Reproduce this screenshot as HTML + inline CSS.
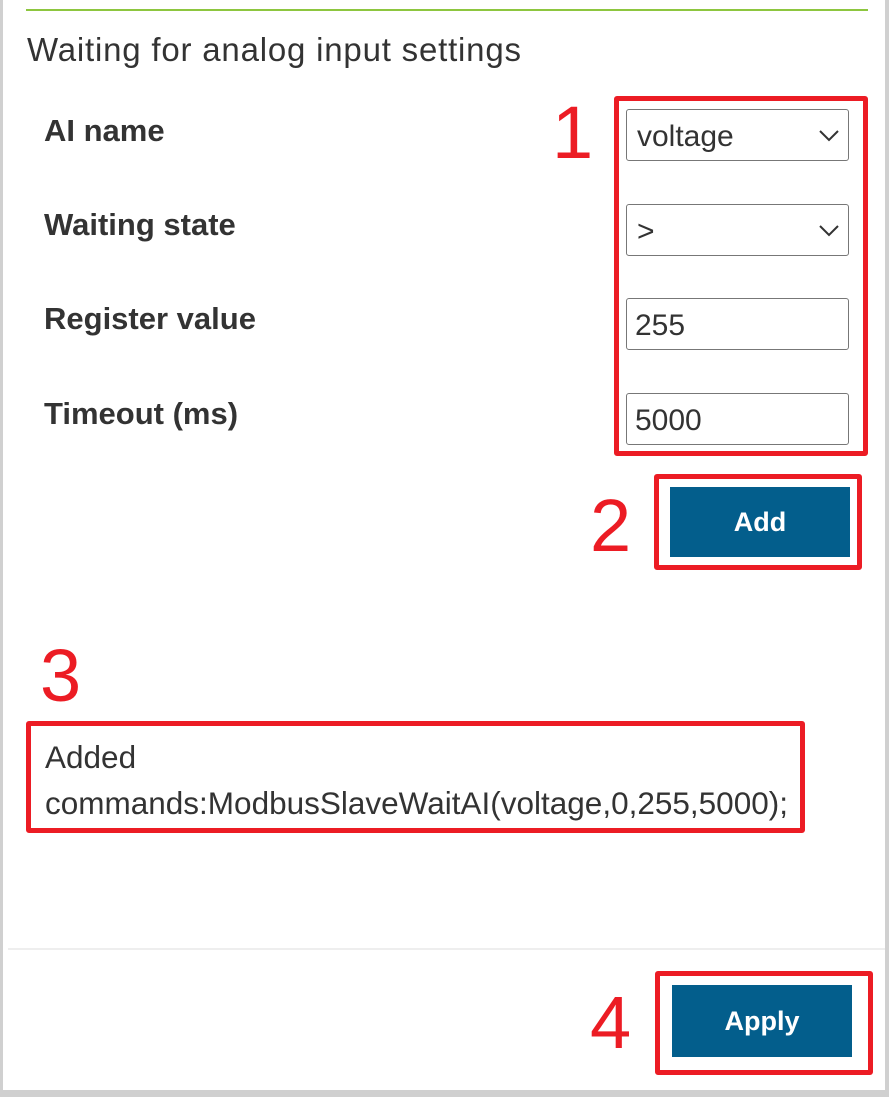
<!DOCTYPE html>
<html><head><style>
body{margin:0;width:889px;height:1097px;background:#d0d0d0;position:relative;overflow:hidden;font-family:"Liberation Sans",sans-serif;}
.p{position:absolute;left:3px;top:0;width:882px;height:1090px;background:#fff;}
.a{position:absolute;}
.lbl{position:absolute;left:44px;font-weight:bold;font-size:31px;color:#333;}
.f{position:absolute;left:626px;width:223px;height:52px;border:1.5px solid #777;border-radius:3px;font-size:30px;color:#333;box-sizing:border-box;padding:10px 0 0 8px;}
.r{position:absolute;border:5px solid #ec1c24;border-radius:3px;box-sizing:border-box;}
.n{position:absolute;color:#ec1c24;font-size:74px;line-height:74px;}
.b{position:absolute;background:#035e8c;color:#fff;font-weight:bold;font-size:27px;text-align:center;}
</style></head><body>
<div class="p"></div>
<div class="a" style="left:26px;top:9px;width:842px;height:2px;background:#8dc63f"></div>
<div class="a" style="left:27px;top:31px;color:#333;font-size:33px;letter-spacing:0.8px">Waiting for analog input settings</div>
<div class="lbl" style="top:113px">AI name</div>
<div class="lbl" style="top:207px">Waiting state</div>
<div class="lbl" style="top:301px">Register value</div>
<div class="lbl" style="top:396px">Timeout (ms)</div>
<div class="f" style="top:109px;padding-left:10px">voltage<svg style="position:absolute;right:9px;top:20px" width="20" height="12"><path d="M1 1L10 10L19 1" stroke="#333" stroke-width="2" fill="none"/></svg></div>
<div class="f" style="top:204px;padding-left:10px">&gt;<svg style="position:absolute;right:9px;top:20px" width="20" height="12"><path d="M1 1L10 10L19 1" stroke="#333" stroke-width="2" fill="none"/></svg></div>
<div class="f" style="top:298px">255</div>
<div class="f" style="top:393px">5000</div>
<div class="r" style="left:614px;top:96px;width:254px;height:360px"></div>
<div class="n" style="left:552px;top:96px">1</div>
<div class="b" style="left:670px;top:487px;width:180px;height:70px;line-height:70px">Add</div>
<div class="r" style="left:654px;top:474px;width:208px;height:96px"></div>
<div class="n" style="left:590px;top:489px">2</div>
<div class="n" style="left:40px;top:639px">3</div>
<div class="r" style="left:26px;top:721px;width:779px;height:112px"></div>
<div class="a" style="left:45px;top:734px;font-size:31.5px;color:#333;line-height:46px">Added<br>commands:ModbusSlaveWaitAI(voltage,0,255,5000);</div>
<div class="a" style="left:8px;top:948px;width:877px;height:2px;background:#eee"></div>
<div class="b" style="left:672px;top:985px;width:180px;height:72px;line-height:72px">Apply</div>
<div class="r" style="left:655px;top:971px;width:218px;height:104px"></div>
<div class="n" style="left:590px;top:986px">4</div>
</body></html>
